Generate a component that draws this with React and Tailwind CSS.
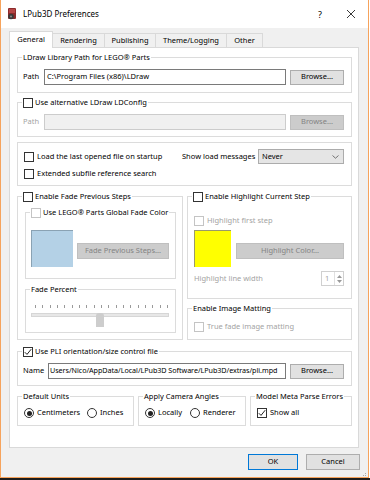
import React from 'react';

const Check = ({ checked, disabled }) => (
  <span className={`w-[10px] h-[10px] shrink-0 border bg-white flex items-center justify-center ${disabled ? 'border-[#c4c4c4]' : 'border-[#333]'}`}>
    {checked && (
      <svg width="8" height="8" viewBox="0 0 8 8">
        <polyline points="0.8,4.2 3,6.4 7.2,1.2" fill="none" stroke="#222" strokeWidth="1" />
      </svg>
    )}
  </span>
);

const Radio = ({ checked }) => (
  <span className="w-[10px] h-[10px] shrink-0 rounded-full border border-[#333] bg-white flex items-center justify-center">
    {checked && <span className="w-[5px] h-[5px] rounded-full bg-[#222]" />}
  </span>
);

// Windows group box: title sits over the top border line
const Group = ({ title, className = '', children }) => (
  <div className={`relative border border-[#dcdcdc] shrink-0 ${className}`}>
    {title && (
      <div className="absolute left-[4px] -top-[6px] h-[11px] bg-white px-[1px] flex items-center gap-[2px] whitespace-nowrap leading-none">
        {title}
      </div>
    )}
    {children}
  </div>
);

const Button = ({ children, disabled, className = '' }) => (
  <div className={`h-[15px] shrink-0 flex items-center justify-center border leading-none ${disabled ? 'bg-[#cccccc] border-[#bfbfbf] text-[#838383]' : 'bg-[#e1e1e1] border-[#adadad]'} ${className}`}>
    {children}
  </div>
);

export default function App() {
  const ticks = Array.from({ length: 19 });

  return (
    <div className="w-[370px] h-[480px] bg-white overflow-hidden text-[7.5px] text-black font-['Noto_Sans',sans-serif]">
      <div className="w-[369px] h-[478px] bg-[#f0f0f0] border-x border-b border-[#f6a35c] flex flex-col">
        {/* title bar */}
        <div className="h-[28px] bg-white flex items-center shrink-0">
          <svg className="ml-[6px]" width="10" height="12" viewBox="0 0 10 12">
            <rect x="1" y="0" width="8" height="11" rx="1" fill="#8c2b2b" />
            <rect x="2" y="1" width="6" height="4" fill="#b54545" />
            <circle cx="4" cy="8.5" r="2.8" fill="#3a3a3a" />
            <circle cx="4" cy="8.5" r="1" fill="#8c8c8c" />
          </svg>
          <span className="ml-[6px] text-[8px] leading-none">LPub3D Preferences</span>
          <span className="ml-auto text-[9px] leading-none">?</span>
          <svg className="ml-[24px] mr-[12px]" width="10" height="10" viewBox="0 0 10 10">
            <path d="M1 1 L9 9 M9 1 L1 9" stroke="#222" strokeWidth="0.9" />
          </svg>
        </div>

        {/* tabs */}
        <div className="h-[19px] flex items-end pl-[8px] shrink-0">
          <div className="relative z-10 -mb-px h-[17px] w-[44px] bg-white border-x border-t border-[#d9d9d9] flex items-center justify-center leading-none">General</div>
          <div className="h-[14px] w-[52px] border-t border-r border-[#d9d9d9] flex items-center justify-center leading-none">Rendering</div>
          <div className="h-[14px] w-[51px] border-t border-r border-[#d9d9d9] flex items-center justify-center leading-none">Publishing</div>
          <div className="h-[14px] w-[71px] border-t border-r border-[#d9d9d9] flex items-center justify-center leading-none">Theme/Logging</div>
          <div className="h-[14px] w-[36px] border-t border-r border-[#d9d9d9] flex items-center justify-center leading-none">Other</div>
        </div>

        {/* pane */}
        <div className="ml-[8px] w-[350px] h-[401px] shrink-0 bg-white border border-[#d9d9d9] pt-[9px] pl-[7px] pr-[6px] flex flex-col">
          {/* LDraw path */}
          <Group title="LDraw Library Path for LEGO® Parts" className="h-[36px] pt-[11px] pl-[5px]">
            <div className="flex items-center h-[16px]">
              <span className="w-[21px] leading-none">Path</span>
              <div className="w-[242px] h-[16px] border border-[#7a7a7a] flex items-center pl-[2px] leading-none whitespace-nowrap">C:\Program Files (x86)\LDraw</div>
              <Button className="ml-[4px] w-[54px]">Browse...</Button>
            </div>
          </Group>

          {/* alternative LDConfig */}
          <Group title={<><Check /><span>Use alternative LDraw LDConfig</span></>} className="mt-[9px] h-[35px] pt-[11px] pl-[5px]">
            <div className="flex items-center h-[16px]">
              <span className="w-[21px] leading-none text-[#a3a3a3]">Path</span>
              <div className="w-[242px] h-[16px] border border-[#cccccc] bg-[#f0f0f0]" />
              <Button disabled className="ml-[4px] w-[54px]">Browse...</Button>
            </div>
          </Group>

          {/* startup options */}
          <Group className="mt-[5px] h-[44px] pt-[6px] pl-[6px] pr-[7px]">
            <div className="flex items-center h-[15px]">
              <div className="w-[158px] flex items-center gap-[3px] leading-none whitespace-nowrap"><Check /><span>Load the last opened file on startup</span></div>
              <span className="w-[76px] leading-none whitespace-nowrap">Show load messages</span>
              <div className="w-[86px] h-[15px] bg-[#e5e5e5] border border-[#acacac] flex items-center justify-between pl-[3px] pr-[4px] leading-none">
                <span>Never</span>
                <svg width="7" height="4" viewBox="0 0 7 4"><path d="M0.5 0.5 L3.5 3.2 L6.5 0.5" fill="none" stroke="#555" strokeWidth="0.8" /></svg>
              </div>
            </div>
            <div className="mt-[4px] h-[12px] flex items-center gap-[3px] leading-none whitespace-nowrap"><Check /><span>Extended subfile reference search</span></div>
          </Group>

          {/* fade + highlight */}
          <div className="mt-[10px] flex gap-[4px] items-start">
            <Group title={<><Check /><span>Enable Fade Previous Steps</span></>} className="w-[166px] h-[144px] pt-[15px] pl-[7px]">
              <Group title={<><Check disabled /><span>Use LEGO® Parts Global Fade Color</span></>} className="w-[151px] h-[67px] pt-[17px] pl-[5px]">
                <div className="flex items-start">
                  <div className="w-[42px] h-[37px] bg-[#b4d1e6] border-l border-t border-[#8aa2b3]" />
                  <Button disabled className="ml-[4px] mt-[13px] w-[92px] h-[16px]">Fade Previous Steps...</Button>
                </div>
              </Group>
              <Group title="Fade Percent" className="mt-[10px] w-[151px] h-[44px] pt-[15px] pl-[5px]">
                <div className="ml-[4px] w-[133px] h-[3px] flex justify-between">
                  {ticks.map((_, i) => <span key={i} className="w-px h-[3px] bg-[#9a9a9a]" />)}
                </div>
                <div className="relative w-[138px] h-[14px]">
                  <div className="mt-[5px] h-[4px] bg-[#e7e7e7] border border-[#d6d6d6]" />
                  <div className="absolute left-[65px] top-0 w-[8px] h-[14px] bg-[#cdcdcd] rounded-t-[3px]" />
                </div>
              </Group>
            </Group>

            <div className="flex flex-col">
              <Group title={<><Check /><span>Enable Highlight Current Step</span></>} className="w-[165px] h-[103px] pt-[18px] pl-[6px] pr-[7px]">
                <div className="h-[12px] flex items-center gap-[3px] leading-none text-[#a3a3a3] whitespace-nowrap"><Check disabled /><span>Highlight first step</span></div>
                <div className="mt-[3px] flex items-start">
                  <div className="w-[37px] h-[37px] bg-[#ffff00] border-l border-t border-[#9a9a6a]" />
                  <Button disabled className="ml-[5px] mt-[13px] w-[108px] h-[16px]">Highlight Color...</Button>
                </div>
                <div className="mt-[4px] h-[15px] flex items-center justify-between leading-none text-[#a3a3a3]">
                  <span>Highlight line width</span>
                  <div className="w-[23px] h-[15px] border border-[#d0d0d0] flex items-center leading-none">
                    <span className="flex-1 pl-[3px]">1</span>
                    <div className="w-[9px] h-full border-l border-[#e0e0e0] flex flex-col items-center justify-center gap-[2px]">
                      <svg width="5" height="3" viewBox="0 0 5 3"><path d="M0 3 L2.5 0 L5 3 Z" fill="#999" /></svg>
                      <svg width="5" height="3" viewBox="0 0 5 3"><path d="M0 0 L2.5 3 L5 0 Z" fill="#999" /></svg>
                    </div>
                  </div>
                </div>
              </Group>
              <Group title="Enable Image Matting" className="mt-[9px] w-[165px] h-[32px] pt-[13px] pl-[6px]">
                <div className="h-[10px] flex items-center gap-[3px] leading-none text-[#a3a3a3] whitespace-nowrap"><Check disabled /><span>True fade image matting</span></div>
              </Group>
            </div>
          </div>

          {/* PLI file */}
          <Group title={<><Check checked /><span>Use PLI orientation/size control file</span></>} className="mt-[11px] h-[35px] pt-[11px] pl-[5px]">
            <div className="flex items-center h-[16px]">
              <span className="w-[25px] leading-none">Name</span>
              <div className="w-[238px] h-[16px] border border-[#7a7a7a] flex items-center overflow-hidden leading-none">
                <span className="shrink-0 whitespace-nowrap pl-px text-[7.2px] tracking-[-0.05px]">Users/Nico/AppData/Local/LPub3D Software/LPub3D/extras/pli.mpd</span>
              </div>
              <Button className="ml-[4px] w-[54px]">Browse...</Button>
            </div>
          </Group>

          {/* bottom option groups */}
          <div className="mt-[10px] flex gap-[4px]">
            <Group title="Default Units" className="w-[117px] h-[30px] pt-[11px] pl-[6px]">
              <div className="h-[10px] flex items-center leading-none">
                <div className="w-[63px] flex items-center gap-[3px]"><Radio checked /><span>Centimeters</span></div>
                <div className="flex items-center gap-[3px]"><Radio /><span>Inches</span></div>
              </div>
            </Group>
            <Group title="Apply Camera Angles" className="w-[108px] h-[30px] pt-[11px] pl-[6px]">
              <div className="h-[10px] flex items-center leading-none">
                <div className="w-[45px] flex items-center gap-[3px]"><Radio checked /><span>Locally</span></div>
                <div className="flex items-center gap-[3px]"><Radio /><span>Renderer</span></div>
              </div>
            </Group>
            <Group title="Model Meta Parse Errors" className="w-[102px] h-[30px] pt-[11px] pl-[6px]">
              <div className="h-[10px] flex items-center gap-[3px] leading-none"><Check checked /><span>Show all</span></div>
            </Group>
          </div>
        </div>

        {/* dialog buttons */}
        <div className="mt-[6px] flex justify-end gap-[8px] pr-[8px] shrink-0">
          <div className="w-[50px] h-[16px] bg-[#e1e1e1] border border-[#0078d7] flex items-center justify-center leading-none">OK</div>
          <div className="w-[54px] h-[16px] bg-[#e1e1e1] border border-[#adadad] flex items-center justify-center leading-none">Cancel</div>
        </div>
        <div className="mt-auto mb-[1px] mr-[2px] self-end grid grid-cols-3 gap-px w-[5px]">
          <span /><span /><span className="w-px h-px bg-[#aaa]" />
          <span /><span className="w-px h-px bg-[#aaa]" /><span className="w-px h-px bg-[#aaa]" />
        </div>
      </div>
      <div className="h-[2px] bg-[#1d1d1d]" />
    </div>
  );
}
